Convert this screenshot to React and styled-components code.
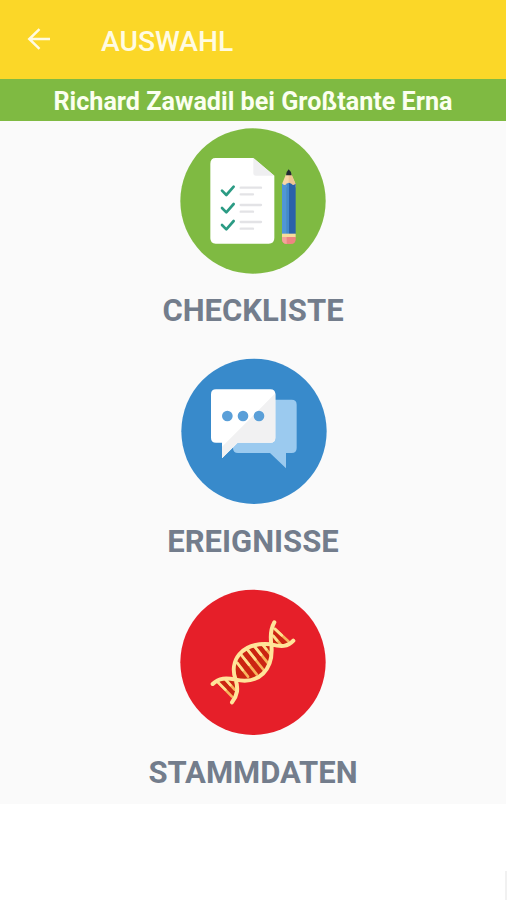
import React from "react";
import styled, { createGlobalStyle } from "styled-components";

const ChecklistIcon = () => (
  <Icon viewBox="30 24 438 438">
    <circle cx="249" cy="243" r="218" fill="#7fba42" />
    <path
      d="M137 114H250L313 167V354Q313 371 296 371H137Q121 371 121 354V131Q121 114 137 114Z"
      fill="#fff"
    />
    <path d="M250 114L313 167H258Q250 167 250 159Z" fill="#efeff1" />
    {[0, 52, 103].map((y) => (
      <g key={y} transform={`translate(0 ${y})`}>
        <path
          d="M156 212L169 225L191 200"
          fill="none"
          stroke="#2b9b84"
          strokeWidth="8"
          strokeLinecap="round"
          strokeLinejoin="round"
        />
        <path
          d="M212 203H273M212 223H249"
          stroke="#e3e3e6"
          strokeWidth="7"
          strokeLinecap="round"
        />
      </g>
    ))}
    <path d="M336 192L348 163H364L377 192V202H336Z" fill="#f8d7a8" />
    <path d="M356 163H364L377 192V202H356Z" fill="#efc593" />
    <path d="M348 166Q350 153 356 148Q363 153 365 166Z" fill="#222a32" />
    <path d="M336 190Q343 200 350 191V342H336Z" fill="#4f96d8" />
    <path d="M349 191L357 188V342H349Z" fill="#4289d0" />
    <path d="M357 188L364 191Q371 200 377 190V342H357Z" fill="#2a62a9" />
    <path d="M336 341H377V352H336Z" fill="#f6dc9c" />
    <path d="M336 351H377V358Q377 372 363 372H350Q336 372 336 358Z" fill="#ee8582" />
    <path d="M336 351H350V372Q336 371 336 358Z" fill="#f3a49b" />
  </Icon>
);

const MessagesIcon = () => (
  <Icon viewBox="33 26 438 438">
    <circle cx="252" cy="243" r="218" fill="#388acb" />
    <path
      d="M204 148H365Q380 148 380 163V293Q380 308 365 308H348V354L300 308H204Q189 308 189 293V163Q189 148 204 148Z"
      fill="#9bcaef"
    />
    <path
      d="M138 117H301Q316 117 316 132V262Q316 277 301 277H203L156 324V277H138Q123 277 123 262V132Q123 117 138 117Z"
      fill="#fff"
    />
    <path d="M316 129V262Q316 277 301 277H203L156 324V289Z" fill="#f1f1f2" />
    {[172, 219, 267].map((x) => (
      <circle key={x} cx={x} cy="197" r="16" fill="#5a9fd8" />
    ))}
  </Icon>
);

const DnaIcon = () => (
  <Icon viewBox="30 30 438 438">
    <circle cx="249" cy="247" r="218" fill="#e61f29" />
    <path
      d="M197 299C177 246 211 184 304 193C316 269 266 313 197 299ZM197 299C178 292 160 297 145 306L188 351Q202 325 197 299ZM304 193Q302 165 312 142L358 185Q332 202 304 193Z"
      fill="#cb2412"
    />
    <g fill="none" strokeLinecap="round">
      <path
        d="M315 147L355 184M310 168L332 193M145 308L186 350M168 300L194 329M276 192L302 224M251 196L295 251M230 206L281 270M214 225L260 283M202 249L234 290"
        stroke="#f8b45c"
        strokeWidth="8"
      />
      <path
        d="M315 147L335 166M310 168L321 181M145 308L166 329M168 300L181 315M276 192L289 208M251 196L273 224M230 206L256 238M214 225L237 254M202 249L218 270"
        stroke="#ffdf90"
        strokeWidth="8"
      />
      <path
        d="M128 312C147 293 169 293 197 299C266 314 312 270 304 193C300 165 302 147 313 127M186 367C203 345 205 326 197 299C177 246 211 184 304 193C333 201 353 201 370 182"
        stroke="#ffe49a"
        strokeWidth="12"
      />
    </g>
  </Icon>
);

const ENTRIES = [
  { label: "CHECKLISTE", icon: ChecklistIcon },
  { label: "EREIGNISSE", icon: MessagesIcon, shift: 1 },
  { label: "STAMMDATEN", icon: DnaIcon },
];

const App = () => (
  <Page>
    <GlobalStyle />
    <Screen>
      <Header>
        <BackButton aria-label="Zurück">
          <svg width="24" height="24" viewBox="0 0 24 24" fill="none">
            <path
              d="M23 12H2.5M12.5 2.2L2.3 12L12.5 21.8"
              stroke="#fffbe2"
              strokeWidth="2.5"
            />
          </svg>
        </BackButton>
        <Title>AUSWAHL</Title>
      </Header>
      <Banner>Richard Zawadil bei Großtante Erna</Banner>
      <Menu>
        {ENTRIES.map(({ label, icon: EntryIcon, shift }) => (
          <Entry key={label}>
            <IconSlot $shift={shift}>
              <EntryIcon />
            </IconSlot>
            <Label>{label}</Label>
          </Entry>
        ))}
      </Menu>
    </Screen>
    <EdgeMark />
  </Page>
);

export default App;

const GlobalStyle = createGlobalStyle`
  * {
    box-sizing: border-box;
  }

  body {
    margin: 0;
    background: #fff;
    font-family: Roboto, sans-serif;
  }
`;

const Page = styled.div`
  display: flex;
  flex-direction: column;
  justify-content: space-between;
  width: 507px;
  height: 900px;
  overflow: hidden;
  background: #fff;
`;

const Screen = styled.main`
  width: 506px;
  height: 804px;
  background: #fafafa;
`;

const Header = styled.header`
  display: flex;
  align-items: center;
  height: 79px;
  padding: 4px 0 0 27px;
  background: #fbd728;
`;

const BackButton = styled.button`
  display: flex;
  width: 74px;
  padding: 0 0 5px;
  border: none;
  background: none;
  cursor: pointer;
`;

const Title = styled.h1`
  margin: 0;
  color: #fffbe2;
  font-size: 28.2px;
  font-weight: 500;
  line-height: 34px;
`;

const Banner = styled.div`
  height: 42px;
  background: #7fba42;
  color: #fbfff0;
  font-size: 25.15px;
  font-weight: 700;
  line-height: 46px;
  text-align: center;
  white-space: nowrap;
`;

const Menu = styled.nav`
  display: flex;
  flex-direction: column;
  padding-top: 7px;
`;

const Entry = styled.div`
  display: flex;
  flex-direction: column;
  align-items: center;
  height: 231px;
`;

const IconSlot = styled.div`
  height: 146px;
  padding-left: ${({ $shift }) => ($shift ? $shift * 2 : 0)}px;
`;

const Icon = styled.svg`
  display: block;
  width: 146px;
  height: 146px;
  overflow: visible;
`;

const Label = styled.div`
  margin-top: 18px;
  color: #737d8c;
  font-size: 31px;
  font-weight: 700;
  line-height: 38px;
`;

const EdgeMark = styled.div`
  align-self: flex-end;
  width: 2px;
  height: 29px;
  background: #f1f1f1;
`;
